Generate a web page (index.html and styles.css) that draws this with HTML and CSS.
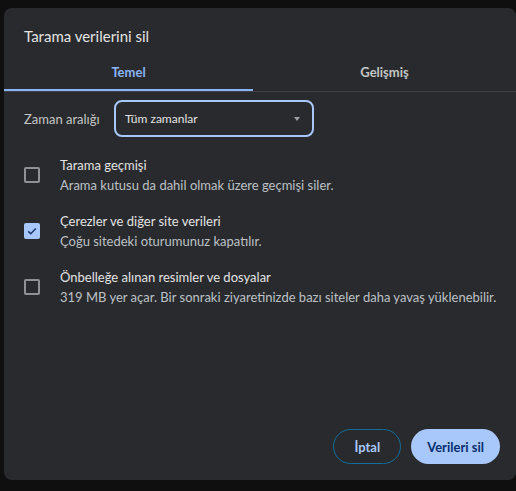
FILE: index.html
```html
<!DOCTYPE html>
<html lang="tr">
<head>
  <meta charset="UTF-8" />
  <meta name="viewport" content="width=device-width, initial-scale=1.0"/>
  <title>Tarama verilerini sil</title>
  <link rel="stylesheet" href="styles.css">
</head>
<body>

  <div class="dialog">
    <h2 class="dialog-title">Tarama verilerini sil</h2>

    <div class="tabs">
      <div class="tab active">Temel</div>
      <div class="tab">Gelişmiş</div>
    </div>

    <div class="range-row">
      <span class="range-label">Zaman aralığı</span>
      <div class="select">
        <span>Tüm zamanlar</span>
        <span class="select-arrow"></span>
      </div>
    </div>

    <div class="option">
      <span class="checkbox"></span>
      <div class="option-text">
        <div class="option-title">Tarama geçmişi</div>
        <div class="option-sub">Arama kutusu da dahil olmak üzere geçmişi siler.</div>
      </div>
    </div>

    <div class="option">
      <span class="checkbox checked">
        <svg width="12" height="12" viewBox="0 0 12 12">
          <path d="M2.2 6.3 L4.8 8.7 L9.8 3.5" fill="none" stroke="#1d3b6e" stroke-width="1.6"/>
        </svg>
      </span>
      <div class="option-text">
        <div class="option-title">Çerezler ve diğer site verileri</div>
        <div class="option-sub">Çoğu sitedeki oturumunuz kapatılır.</div>
      </div>
    </div>

    <div class="option">
      <span class="checkbox"></span>
      <div class="option-text">
        <div class="option-title">Önbelleğe alınan resimler ve dosyalar</div>
        <div class="option-sub">319 MB yer açar. Bir sonraki ziyaretinizde bazı siteler daha yavaş yüklenebilir.</div>
      </div>
    </div>

    <div class="footer">
      <button class="btn btn-outline">İptal</button>
      <button class="btn btn-filled">Verileri sil</button>
    </div>
  </div>

</body>
</html>
```

FILE: styles.css
```css
body {
  margin: 0;
  height: 491px;
  overflow: hidden;
  background: #0f0f0f;
  font-family: Lato, 'Noto Sans', sans-serif;
  color: #e8eaed;
}

.dialog {
  display: flex;
  flex-direction: column;
  box-sizing: border-box;
  width: 512px;
  height: 472px;
  margin: 8px 0 0 4px;
  background: #292a2d;
  border-radius: 8px;
}

.dialog-title {
  margin: 0;
  padding: 18px 20px 0;
  font-size: 15px;
  font-weight: normal;
  line-height: 20px;
  color: #e3e3e3;
}

.tabs {
  display: flex;
  margin-top: 7px;
  border-bottom: 1px solid #3c4043;
}

.tab {
  display: flex;
  align-items: center;
  justify-content: center;
  height: 38px;
  font-size: 13px;
  font-weight: bold;
  color: #c4c7c5;
  position: relative;
}

.tab:first-child {
  width: 249px;
}

.tab:last-child {
  flex: 1;
}

.tab.active {
  color: #8ab4f8;
}

.tab.active::after {
  content: "";
  position: absolute;
  left: 0;
  right: 0;
  bottom: 0;
  height: 2px;
  background: #8ab4f8;
}

.range-row {
  display: flex;
  align-items: center;
  margin-top: 8px;
  padding-left: 20px;
}

.range-label {
  width: 90px;
  font-size: 13px;
  color: #c4c7c5;
}

.select {
  display: flex;
  align-items: center;
  justify-content: space-between;
  box-sizing: border-box;
  width: 200px;
  height: 37px;
  padding: 0 12px 0 9px;
  border: 2px solid #a8c7fa;
  border-radius: 8px;
  font-size: 12px;
  color: #e3e3e3;
}

.select-arrow {
  width: 0;
  height: 0;
  border-left: 3.5px solid transparent;
  border-right: 3.5px solid transparent;
  border-top: 4px solid #9aa0a6;
}

.option {
  display: flex;
  align-items: center;
  gap: 20px;
  margin-top: 16px;
  padding-left: 20px;
}

.range-row + .option {
  margin-top: 18px;
}

.checkbox {
  display: flex;
  align-items: center;
  justify-content: center;
  box-sizing: border-box;
  width: 16px;
  height: 16px;
  border: 2px solid #8e9196;
  border-radius: 2px;
  flex-shrink: 0;
}

.checkbox.checked {
  background: #a8c7fa;
  border-color: #a8c7fa;
}

.option-text {
  line-height: 20px;
  font-size: 13px;
  white-space: nowrap;
}

.option-title {
  color: #e3e3e3;
}

.option-sub {
  color: #bdc1c6;
}

.footer {
  display: flex;
  justify-content: flex-end;
  gap: 10px;
  margin-top: auto;
  padding: 0 16px 16px;
}

.btn {
  height: 35px;
  padding: 0 16px;
  border-radius: 18px;
  font-family: inherit;
  font-size: 13px;
  font-weight: bold;
  cursor: pointer;
}

.btn-outline {
  padding: 0 20px;
  background: transparent;
  border: 1px solid #136c9c;
  color: #a8c7fa;
}

.btn-filled {
  background: #a8c7fa;
  border: none;
  color: #062e6f;
}
```
